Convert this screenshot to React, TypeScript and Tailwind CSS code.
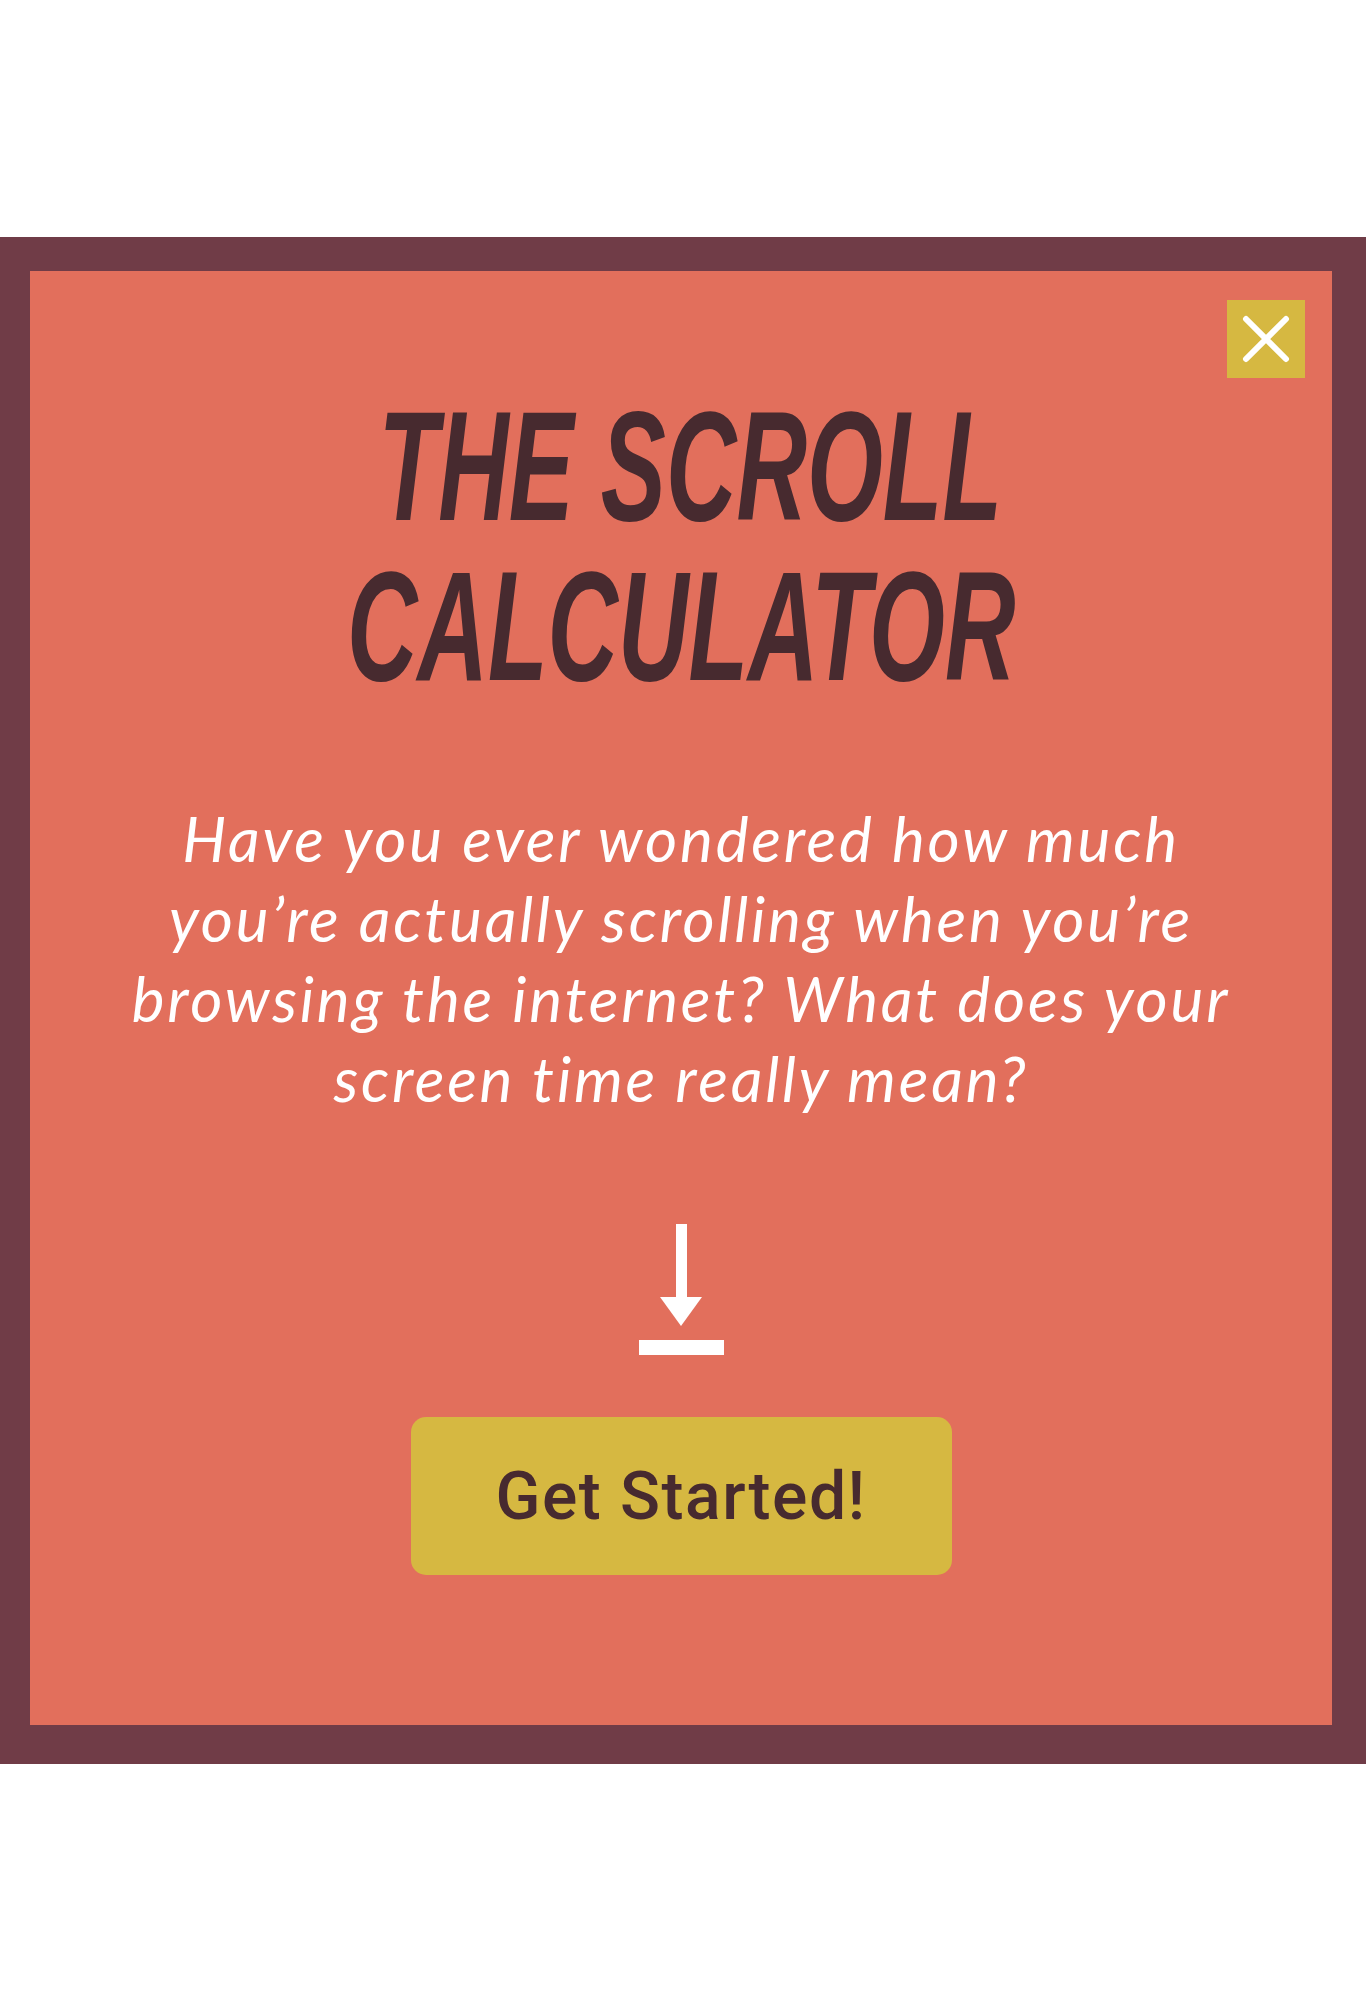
const CloseIcon = () => (
	<svg width="78" height="78" viewBox="0 0 78 78" fill="none">
		<path
			d="M19 19L59 59M59 19L19 59"
			stroke="white"
			strokeWidth="6"
			strokeLinecap="round"
		/>
	</svg>
);

const DownArrow = () => (
	<svg width="85" height="131" viewBox="0 0 85 131" fill="white">
		<rect x="37" y="0" width="11" height="75" />
		<polygon points="21,73 63,73 42,102" />
		<rect x="0" y="116" width="85" height="15" />
	</svg>
);

const intro = [
	"Have you ever wondered how much",
	"you’re actually scrolling when you’re",
	"browsing the internet? What does your",
	"screen time really mean?",
];

export default function App() {
	return (
		<div className="min-h-[2000px] bg-white pt-[237px]">
			<div className="border-t-[34px] border-b-[39px] border-l-[30px] border-r-[34px] border-[#703c47]">
				<div className="relative flex flex-col items-center bg-[#e26f5c] pt-[116px] pb-[150px]">
					<button
						type="button"
						aria-label="close"
						className="absolute top-[29px] right-[27px] w-[78px] h-[78px] bg-[#d6b841] flex items-center justify-center"
					>
						<CloseIcon />
					</button>

					{/* condensed look: squeeze sideways, stretch up */}
					<div className="h-[320px] w-full flex justify-center">
						<h1 className="origin-top scale-x-[0.827] scale-y-[1.32] text-center font-bold italic uppercase text-[118px] leading-[121px] whitespace-nowrap text-[#472a2f] font-['Liberation_Sans',sans-serif]">
							<span className="block pl-[22px]">The Scroll</span>
							<span className="block">Calculator</span>
						</h1>
					</div>

					<p className="mt-[91px] text-center italic text-white text-[62px] leading-[80px] tracking-[2.8px] font-['Lato',sans-serif]">
						{intro.map((line) => (
							<span key={line} className="block whitespace-nowrap">
								{line}
							</span>
						))}
					</p>

					<div className="mt-[106px]">
						<DownArrow />
					</div>

					<button
						type="button"
						className="mt-[62px] w-[541px] h-[158px] rounded-[15px] bg-[#d6b841] text-[#472a2f] text-[66px] font-medium font-['Roboto',sans-serif] tracking-[1.5px]"
					>
						Get Started!
					</button>
				</div>
			</div>
		</div>
	);
}
